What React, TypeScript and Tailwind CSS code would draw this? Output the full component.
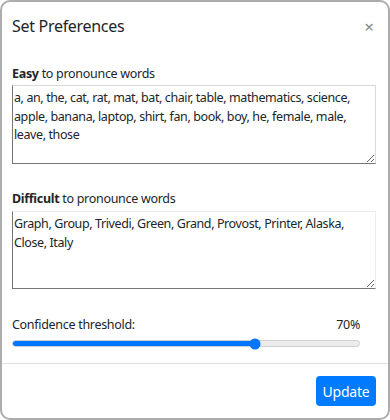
import { useState } from "react";

const EASY_WORDS =
  "a, an, the, cat, rat, mat, bat, chair, table, mathematics, science, apple, banana, laptop, shirt, fan, book, boy, he, female, male, leave, those";
const DIFFICULT_WORDS =
  "Graph, Group, Trivedi, Green, Grand, Provost, Printer, Alaska, Close, Italy";

export default function App() {
  const [easy, setEasy] = useState(EASY_WORDS);
  const [difficult, setDifficult] = useState(DIFFICULT_WORDS);
  const threshold = 70;

  return (
    <div className="h-[420px] w-[390px] bg-white font-['Noto_Sans',sans-serif] text-[#212529]">
      <div className="flex h-full flex-col rounded-[10px] border-2 border-[#acacac] bg-white">
        <div className="flex items-center justify-between pl-[10px] pr-[14px] pt-[13px]">
          <h2 className="text-[16px] leading-[22px] tracking-[-0.3px]">Set Preferences</h2>
          <button type="button" aria-label="Close" className="text-[17px] leading-none text-[#888]">
            ×
          </button>
        </div>

        <div className="flex flex-col pl-[10px] pr-[12px] pt-[28px]">
          <label className="text-[12.5px] leading-[18px] tracking-[-0.3px]">
            <span className="font-bold">Easy</span> to pronounce words
          </label>
          <textarea
            value={easy}
            onChange={(e) => setEasy(e.target.value)}
            className="mt-[2px] h-[79px] w-full border border-[#d9d9d9] border-b-[#767676] border-l-[#767676] px-[1px] pb-[2px] pt-[3px] text-[12.5px] leading-[18.5px] tracking-[-0.4px] outline-none"
          />

          <label className="mt-[26px] text-[12.5px] leading-[18px] tracking-[-0.3px]">
            <span className="font-bold">Difficult</span> to pronounce words
          </label>
          <textarea
            value={difficult}
            onChange={(e) => setDifficult(e.target.value)}
            className="mt-[3px] h-[78px] w-full border border-[#ececec] border-b-[#767676] border-l-[#767676] px-[1px] pb-[2px] pt-[3px] text-[12.5px] leading-[18.5px] tracking-[-0.4px] outline-none"
          />

          <div className="mr-[16px] mt-[27px] flex items-center justify-between text-[12.5px] leading-[18px] tracking-[-0.3px]">
            <span>Confidence threshold:</span>
            <span>{threshold}%</span>
          </div>
          <div className="relative mr-[16px] mt-[6px] h-[7px] rounded-full border border-[#cfcfcf] bg-[#ececec]">
            <div className="h-full rounded-full bg-[#0075ff]" style={{ width: `${threshold}%` }} />
            <div
              className="absolute top-1/2 h-[11px] w-[11px] -translate-x-1/2 -translate-y-1/2 rounded-full bg-[#0075ff]"
              style={{ left: `${threshold}%` }}
            />
          </div>
        </div>

        <div className="mt-auto flex justify-end border-t border-[#dee2e6] pb-[12px] pl-[10px] pr-[12px] pt-[12px]">
          <button
            type="button"
            className="h-[30px] w-[60px] rounded-[4px] bg-[#007bff] text-[14px] tracking-[-0.2px] text-white"
          >
            Update
          </button>
        </div>
      </div>
    </div>
  );
}
